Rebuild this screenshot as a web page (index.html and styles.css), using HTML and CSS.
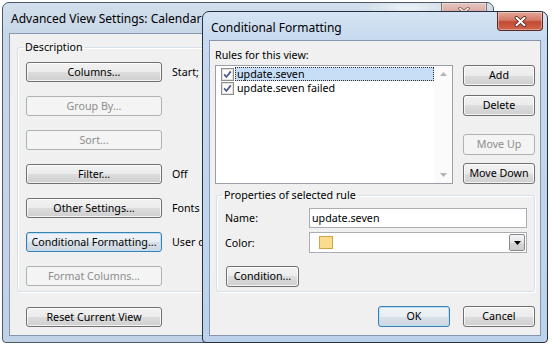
FILE: index.html
```html
<!DOCTYPE html>
<html>
<head>
<meta charset="utf-8">
<link rel="stylesheet" href="styles.css">
</head>
<body>
<div class="desktop">
  <div class="win back">
    <div class="titlebar">
      <span class="title">Advanced View Settings: Calendar</span>
      <span class="close inactive"><svg width="12" height="10" viewBox="0 0 12 10"><path d="M2 1.5 L10 8.5 M10 1.5 L2 8.5" stroke="#7a4a44" stroke-width="3.4" stroke-linecap="round"/><path d="M2 1.5 L10 8.5 M10 1.5 L2 8.5" stroke="#f4e6e4" stroke-width="2" stroke-linecap="round"/></svg></span>
    </div>
    <div class="client">
      <fieldset class="group desc">
        <legend>Description</legend>
        <div class="rows">
          <div class="row"><button class="btn wide">Columns...</button><span class="val">Start;</span></div>
          <div class="row"><button class="btn wide" disabled>Group By...</button></div>
          <div class="row"><button class="btn wide" disabled>Sort...</button></div>
          <div class="row"><button class="btn wide">Filter...</button><span class="val">Off</span></div>
          <div class="row"><button class="btn wide">Other Settings...</button><span class="val">Fonts</span></div>
          <div class="row"><button class="btn wide focus">Conditional Formatting...</button><span class="val">User d</span></div>
          <div class="row"><button class="btn wide" disabled>Format Columns...</button></div>
        </div>
      </fieldset>
      <button class="btn wide reset">Reset Current View</button>
    </div>
  </div>

  <div class="win front">
    <div class="titlebar">
      <span class="title">Conditional Formatting</span>
      <span class="close"><svg width="13" height="11" viewBox="0 0 13 11"><path d="M2.5 1.8 L10.5 9.2 M10.5 1.8 L2.5 9.2" stroke="#4b1a14" stroke-width="3.6" stroke-linecap="round"/><path d="M2.5 1.8 L10.5 9.2 M10.5 1.8 L2.5 9.2" stroke="#ffffff" stroke-width="2.1" stroke-linecap="round"/></svg></span>
    </div>
    <div class="client fclient">
      <div class="rules-label">Rules for this view:</div>
      <div class="listrow">
        <div class="list">
          <div class="items">
            <div class="item">
              <span class="cb"><svg width="13" height="13" viewBox="0 0 13 13"><rect x="0.5" y="0.5" width="12" height="12" fill="#f6f6f6" stroke="#8f8f8f"/><rect x="1.5" y="1.5" width="10" height="10" fill="#fbfbfb" stroke="#e2e2e2"/><path d="M3.2 6.4 L5.4 9 L9.8 3.4" fill="none" stroke="#4a5c86" stroke-width="1.7"/></svg></span>
              <span class="itext sel">update.seven</span>
            </div>
            <div class="item">
              <span class="cb"><svg width="13" height="13" viewBox="0 0 13 13"><rect x="0.5" y="0.5" width="12" height="12" fill="#f6f6f6" stroke="#8f8f8f"/><rect x="1.5" y="1.5" width="10" height="10" fill="#fbfbfb" stroke="#e2e2e2"/><path d="M3.2 6.4 L5.4 9 L9.8 3.4" fill="none" stroke="#4a5c86" stroke-width="1.7"/></svg></span>
              <span class="itext">update.seven failed</span>
            </div>
          </div>
          <div class="vscroll">
            <svg width="7" height="4" viewBox="0 0 7 4"><path d="M0 4 L3.5 0 L7 4 Z" fill="#b4b4b4"/></svg>
            <svg width="7" height="4" viewBox="0 0 7 4"><path d="M0 0 L3.5 4 L7 0 Z" fill="#b4b4b4"/></svg>
          </div>
        </div>
        <div class="btncol">
          <button class="btn side">Add</button>
          <button class="btn side del">Delete</button>
          <button class="btn side up" disabled>Move Up</button>
          <button class="btn side down">Move Down</button>
        </div>
      </div>
      <fieldset class="group props">
        <legend>Properties of selected rule</legend>
        <div class="field">
          <span class="flabel">Name:</span>
          <span class="input">update.seven</span>
        </div>
        <div class="field color">
          <span class="flabel">Color:</span>
          <span class="input combo"><span class="swatch"></span><span class="ddbtn"><svg width="7" height="4" viewBox="0 0 7 4"><path d="M0 0 L3.5 4 L7 0 Z" fill="#000"/></svg></span></span>
        </div>
        <button class="btn cond">Condition...</button>
      </fieldset>
      <div class="okrow">
        <button class="btn side focus">OK</button>
        <button class="btn side">Cancel</button>
      </div>
    </div>
  </div>
</div>
</body>
</html>
```

FILE: styles.css
```css
* { box-sizing: border-box; }
body {
  margin: 0;
  background: #ffffff;
  font-family: "Noto Sans", sans-serif;
  font-size: 10.7px;
  color: #000;
}
.desktop {
  position: relative;
  width: 552px;
  height: 348px;
  overflow: hidden;
}
.win {
  position: absolute;
  display: flex;
  flex-direction: column;
  border: 1px solid #2f3b4a;
  border-radius: 7px 7px 4px 4px;
  overflow: hidden;
}
.back {
  left: 2px;
  top: 2px;
  width: 492px;
  height: 341px;
  border-color: #4e5968;
  background:
    radial-gradient(ellipse 45px 9px at 405px 5px, rgba(240,244,248,0.9), rgba(240,244,248,0) 100%),
    linear-gradient(to bottom, #d2deeb 0, #c8d7e8 30px, #c0d2e7 100%);
}
.front {
  left: 202px;
  top: 11px;
  width: 346px;
  height: 332px;
  border-color: #27313e;
  background: linear-gradient(to bottom, #d6e4f4 0, #c6d9ef 28px, #bcd2ec 100%);
}
.titlebar {
  display: flex;
  align-items: flex-start;
  flex: none;
}
.back .titlebar { height: 30px; }
.front .titlebar { height: 28px; }
.title {
  padding-left: 8px;
  line-height: 15px;
  font-size: 12px;
  white-space: nowrap;
}
.back .title { margin-top: 8px; }
.front .title { margin-top: 8px; }
.close {
  margin-left: auto;
  width: 46px;
  height: 19px;
  display: flex;
  align-items: center;
  justify-content: center;
  border: 1px solid #5b2a22;
  border-top: none;
  border-radius: 0 0 4px 4px;
  background: linear-gradient(to bottom, #e8a898 0, #d27a68 45%, #c34a33 55%, #d0664c 100%);
  box-shadow: inset 0 0 0 1px rgba(255,255,255,0.35);
}
.front .close { margin-right: 4px; }
.close.inactive {
  margin-right: 6px;
  border-color: #8c6f6c;
  background: linear-gradient(to bottom, #e6c5c0 0, #d9aaa3 50%, #cf9a92 100%);
}
.client {
  flex: 1;
  margin: 0 6px 6px;
  border: 1px solid #8597ad;
  background: #f0f0f0;
  display: flex;
  flex-direction: column;
  align-items: flex-start;
}

/* group boxes */
.group {
  border: 1px solid #d5dfe5;
  border-radius: 3px;
  box-shadow: inset 1px 1px 0 #ffffff, 1px 1px 0 #ffffff;
  margin: 0;
}
.group legend {
  padding: 0 2px;
  margin-left: -3px;
  line-height: 15px;
}
.desc {
  align-self: stretch;
  margin: 6px 7px 0 7px;
  padding: 7px 8px 5px 8px;
}
.rows {
  display: flex;
  flex-direction: column;
  gap: 14px;
}
.row {
  display: flex;
  align-items: center;
  gap: 10px;
  height: 20px;
}
.val { white-space: nowrap; }

/* buttons */
.btn {
  font: inherit;
  color: #000;
  height: 21px;
  padding: 0;
  border: 1px solid #707070;
  border-radius: 3px;
  background: linear-gradient(to bottom, #f2f2f2 0, #ebebeb 50%, #dddddd 50%, #cfcfcf 100%);
  box-shadow: inset 0 0 0 1px rgba(255,255,255,0.75);
  line-height: 17px;
  text-align: center;
  white-space: nowrap;
}
.btn:disabled {
  color: #8d8d8d;
  border-color: #adb2b5;
  background: #f4f4f4;
  box-shadow: none;
}
.btn.focus {
  border-color: #3c7fb1;
  box-shadow: inset 0 0 0 1px #b9e0f7;
  background: linear-gradient(to bottom, #f0f4f7 0, #e8eef3 50%, #d9e2ea 50%, #cfd8e0 100%);
}
.btn.wide { width: 136px; height: 20px; line-height: 16px; }
.reset { margin: 15px 0 0 16px; }

/* front client */
.fclient { padding: 0 5px 0 5px; }
.rules-label {
  line-height: 15px;
  margin-top: 7px;
}
.listrow {
  display: flex;
  gap: 10px;
  margin-top: 2px;
}
.list {
  width: 238px;
  height: 119px;
  border: 1px solid #9a9ea6;
  background: #fff;
  display: flex;
}
.items {
  flex: 1;
  padding: 1px 0 0 5px;
}
.item {
  display: flex;
  align-items: center;
  height: 14px;
}
.cb { width: 13px; height: 13px; display: flex; margin-right: 1px; }
.itext {
  flex: 1;
  line-height: 12px;
  padding: 0 1px;
  border: 1px solid transparent;
  white-space: nowrap;
}
.itext.sel {
  background: #c6def6;
  border: 1px dotted #303030;
}
.vscroll {
  width: 18px;
  display: flex;
  flex-direction: column;
  justify-content: space-between;
  align-items: center;
  padding: 6px 0 6px;
  background: #fbfbfb;
}
.btncol {
  display: flex;
  flex-direction: column;
  width: 72px;
}
.btn.side { width: 72px; }
.del { margin-top: 9px; }
.up { margin-top: 18px; }
.down { margin-top: 8px; }

.props {
  align-self: stretch;
  margin: 4px 0 0 1px;
  padding: 5px 7px 4px 8px;
}
.field {
  display: flex;
  align-items: center;
}
.flabel { width: 84px; }
.input {
  flex: 1;
  height: 20px;
  border: 1px solid #abadb3;
  background: #fff;
  line-height: 18px;
  padding-left: 2px;
}
.field.color { margin-top: 4px; }
.combo {
  height: 21px;
  display: flex;
  align-items: center;
  padding-left: 9px;
}
.swatch {
  width: 14px;
  height: 13px;
  background: #fbdc8e;
  border: 1px solid #d0a545;
}
.ddbtn {
  margin-left: auto;
  margin-right: 1px;
  width: 16px;
  height: 17px;
  border: 1px solid #8a8a8a;
  border-radius: 2px;
  background: linear-gradient(to bottom, #f4f4f4 0, #e6e6e6 50%, #d8d8d8 50%, #cccccc 100%);
  display: flex;
  align-items: center;
  justify-content: center;
}
.cond { width: 73px; margin: 13px 0 0 1px; }
.okrow {
  align-self: stretch;
  display: flex;
  justify-content: flex-end;
  gap: 13px;
  margin-top: 14px;
}
```
